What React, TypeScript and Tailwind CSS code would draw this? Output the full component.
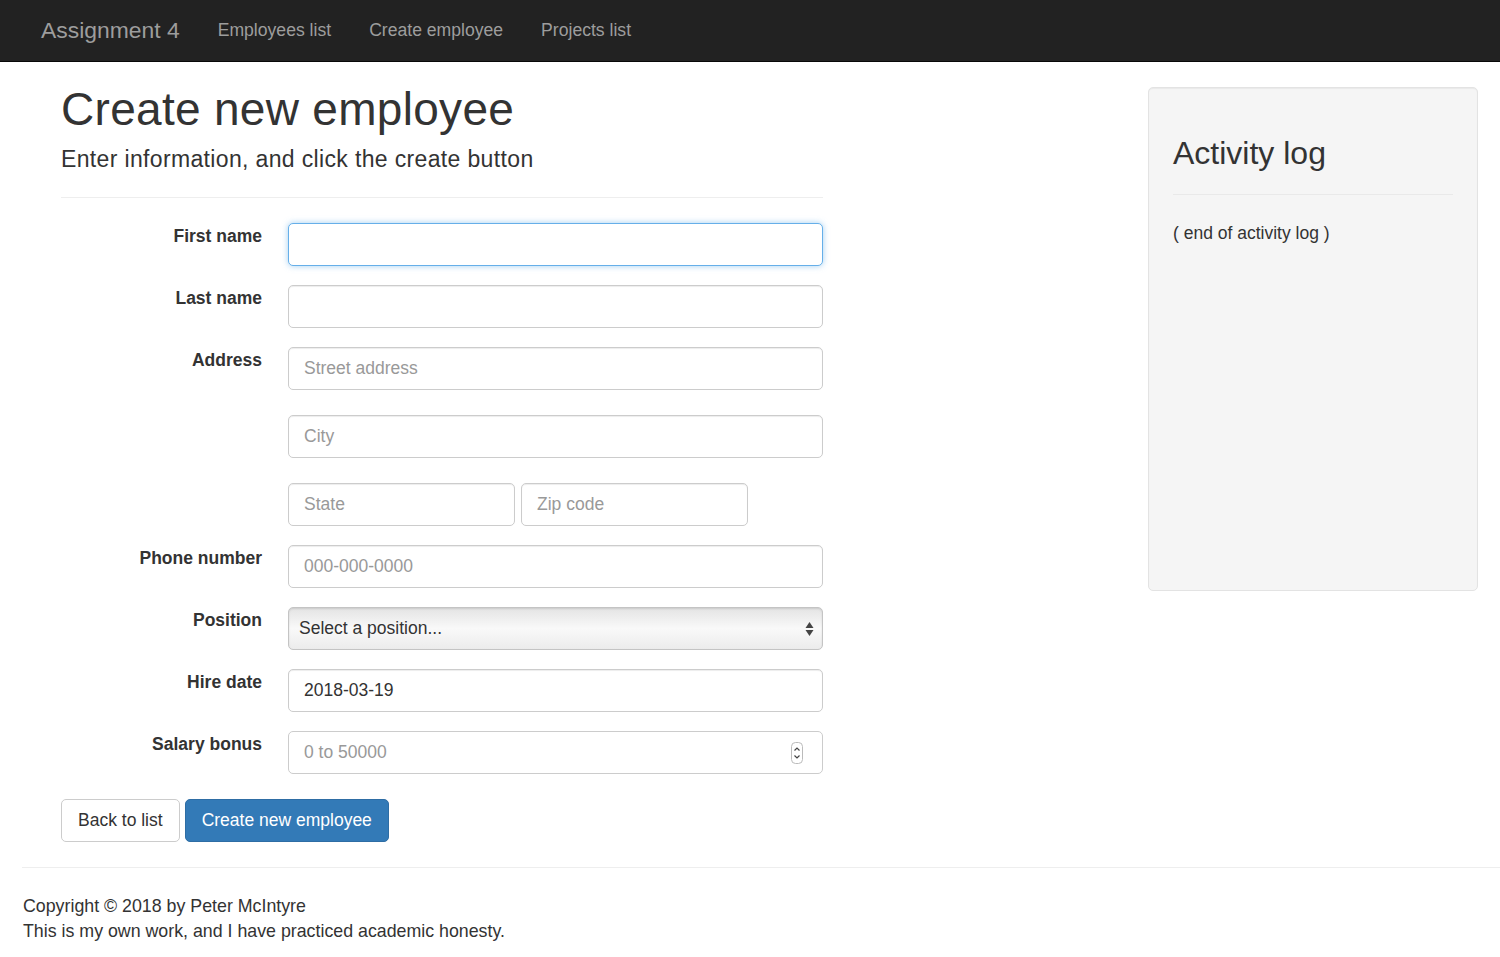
const font = { fontFamily: '"Liberation Sans", Arial, sans-serif' }

function Label({ children }: { children?: React.ReactNode }) {
  return (
    <div className="w-[201px] shrink-0 pt-[1px] text-right text-[17.5px] font-bold leading-[24px] text-[#333]">
      {children}
    </div>
  )
}

function Input({ placeholder, value, focus, className = '' }: { placeholder?: string; value?: string; focus?: boolean; className?: string }) {
  return (
    <div
      className={
        'flex h-[43px] items-center rounded-[5px] border bg-white px-[15px] text-[17.5px] ' +
        (focus ? 'border-[#66afe9] shadow-[0_0_6px_rgba(102,175,233,0.6)] ' : 'border-[#ccc] shadow-[inset_0_1px_1px_rgba(0,0,0,0.075)] ') +
        className
      }
    >
      {value ? <span className="text-[#333]">{value}</span> : <span className="text-[#999]">{placeholder}</span>}
    </div>
  )
}

export default function App() {
  return (
    <div style={font} className="min-h-[957px] bg-white text-[#333]">
      <nav className="flex h-[62px] items-center border-b border-[#080808] bg-[#222] pl-[41px]">
        <span className="text-[22.9px] text-[#9d9d9d]">Assignment 4</span>
        <div className="ml-[38px] flex gap-[38px] text-[17.6px] text-[#9d9d9d]">
          <span>Employees list</span>
          <span>Create employee</span>
          <span>Projects list</span>
        </div>
      </nav>

      <div className="flex justify-between px-[22px]">
        <div className="w-[801px] pl-[39px]">
          <h1 className="mt-[22px] text-[46px] leading-[50px] tracking-[0.3px] text-[#333]">Create new employee</h1>
          <p className="mt-[13px] text-[23px] leading-[24px] tracking-[0.35px] text-[#333]">Enter information, and click the create button</p>
          <div className="mt-[26px] border-t border-[#eee]" />

          <div className="mt-[25px] flex flex-col gap-[19px]">
            <div className="flex gap-[26px]">
              <Label>First name</Label>
              <Input focus className="flex-1" />
            </div>
            <div className="flex gap-[26px]">
              <Label>Last name</Label>
              <Input className="flex-1" />
            </div>
            <div className="flex gap-[26px]">
              <Label>Address</Label>
              <div className="flex flex-1 flex-col gap-[25px]">
                <Input placeholder="Street address" />
                <Input placeholder="City" />
                <div className="flex gap-[6px]">
                  <Input placeholder="State" className="w-[227px]" />
                  <Input placeholder="Zip code" className="w-[227px]" />
                </div>
              </div>
            </div>
            <div className="flex gap-[26px]">
              <Label>Phone number</Label>
              <Input placeholder="000-000-0000" className="flex-1" />
            </div>
            <div className="flex gap-[26px]">
              <Label>Position</Label>
              <div className="flex h-[43px] flex-1 items-center justify-between rounded-[5px] border border-[#c4c4c4] bg-gradient-to-b from-[#e4e4e4] via-[#f9f9f9] to-[#ececec] pl-[10px] pr-[8px] text-[17.5px] text-[#333] shadow-[inset_0_1px_2px_rgba(0,0,0,0.12)]">
                <span>Select a position...</span>
                <svg width="9" height="16" viewBox="0 0 9 16">
                  <path d="M4.5 1 L8.5 7 L0.5 7 Z" fill="#444" />
                  <path d="M4.5 15 L8.5 9 L0.5 9 Z" fill="#444" />
                </svg>
              </div>
            </div>
            <div className="flex gap-[26px]">
              <Label>Hire date</Label>
              <Input value="2018-03-19" className="flex-1" />
            </div>
            <div className="flex gap-[26px]">
              <Label>Salary bonus</Label>
              <div className="flex h-[43px] flex-1 items-center justify-between rounded-[5px] border border-[#ccc] bg-white pl-[15px] pr-[19px] text-[17.5px] text-[#999]">
                <span>0 to 50000</span>
                <svg width="12" height="22" viewBox="0 0 12 22">
                  <rect x="0.5" y="0.5" width="11" height="21" rx="4" fill="#fff" stroke="#bbb" />
                  <path d="M3.5 8.5 L6 6 L8.5 8.5" fill="none" stroke="#444" strokeWidth="1.2" />
                  <path d="M3.5 13.5 L6 16 L8.5 13.5" fill="none" stroke="#444" strokeWidth="1.2" />
                </svg>
              </div>
            </div>
          </div>

          <div className="mt-[25px] flex gap-[5px]">
            <div className="flex h-[43px] items-center rounded-[5px] border border-[#ccc] bg-white px-[16px] text-[17.5px] text-[#333]">Back to list</div>
            <div className="flex h-[43px] items-center rounded-[5px] border border-[#2e6da4] bg-[#337ab7] px-[16px] text-[17.5px] text-white">Create new employee</div>
          </div>
        </div>

        <div className="mt-[25px] h-[504px] w-[330px] rounded-[5px] border border-[#e3e3e3] bg-[#f5f5f5] px-[24px] pt-[24px] shadow-[inset_0_1px_1px_rgba(0,0,0,0.05)]">
          <h2 className="mt-[24px] text-[32px] leading-[34px] text-[#333]">Activity log</h2>
          <div className="mt-[24px] border-t border-[#e9e9e9]" />
          <p className="mt-[26px] text-[17.5px] leading-[24px] text-[#333]">( end of activity log )</p>
        </div>
      </div>

      <div className="ml-[22px] mt-[25px] border-t border-[#eee]" />
      <div className="px-[23px] pt-[26px] text-[17.8px] leading-[25px] text-[#333]">
        <p>Copyright © 2018 by Peter McIntyre</p>
        <p>This is my own work, and I have practiced academic honesty.</p>
      </div>
    </div>
  )
}
